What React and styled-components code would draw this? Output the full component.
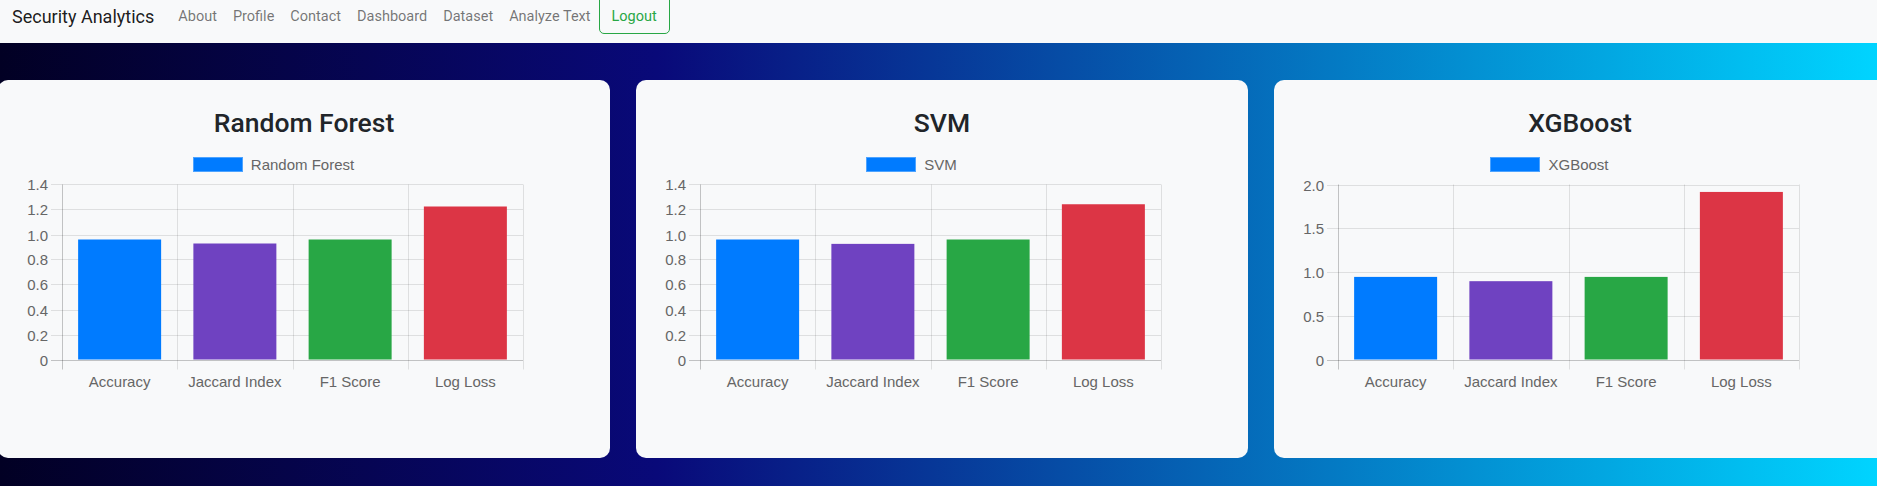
import React from "react";
import styled, { createGlobalStyle } from "styled-components";

const GlobalStyle = createGlobalStyle`
  html, body {
    margin: 0;
    padding: 0;
  }
  body {
    overflow: hidden;
    background: #020024;
    font-family: Roboto, "Liberation Sans", Arial, sans-serif;
  }
`;

const Navbar = styled.nav`
  box-sizing: border-box;
  height: 43px;
  padding: 0 12px;
  background: #f8f9fa;
`;

const NavInner = styled.div`
  display: flex;
  align-items: center;
  height: 34px;
`;

const Brand = styled.a`
  margin-right: 16px;
  font-size: 18px;
  line-height: 24px;
  color: rgba(0, 0, 0, 0.9);
  text-decoration: none;
`;

const NavLink = styled.a`
  padding: 0 8px;
  font-size: 14.5px;
  line-height: 24px;
  color: rgba(0, 0, 0, 0.55);
  text-decoration: none;
`;

const LogoutButton = styled.button`
  align-self: flex-end;
  box-sizing: border-box;
  padding: 9px 12px 4px;
  border: 1px solid #28a745;
  border-radius: 5px;
  background: transparent;
  font-family: inherit;
  font-size: 14.5px;
  line-height: 24px;
  color: #28a745;
`;

const Main = styled.main`
  padding: 37px 0 28px;
  overflow: hidden;
  background: linear-gradient(90deg, #020024 0%, #090979 35%, #00d4ff 100%);
`;

const CardRow = styled.div`
  display: flex;
  gap: 26px;
  width: 1888px;
  margin-left: -2px;
`;

const Card = styled.section`
  flex: 0 0 612px;
  box-sizing: border-box;
  padding: 26px 0 58px;
  border-radius: 10px;
  background: #f8f9fa;
`;

const Title = styled.h3`
  margin: 0;
  font-size: 26.5px;
  font-weight: 500;
  line-height: 34px;
  text-align: center;
  color: #212529;
`;

const ChartWrap = styled.div`
  width: 551px;
`;

const Legend = styled.div`
  display: flex;
  justify-content: center;
  align-items: center;
  gap: 8px;
  height: 15px;
  margin-top: 17px;
  font-family: "Liberation Sans", Arial, sans-serif;
  font-size: 15px;
  line-height: 15px;
  color: #666;
`;

const Swatch = styled.span`
  box-sizing: border-box;
  width: 50px;
  height: 15px;
  border: 1px solid #4da3ff;
  background: #007bff;
`;

const COLORS = ["#007bff", "#6f42c1", "#28a745", "#dc3545"];
const LABELS = ["Accuracy", "Jaccard Index", "F1 Score", "Log Loss"];

const MODELS = [
  { name: "Random Forest", values: [0.96, 0.928, 0.96, 1.224], max: 1.4, step: 0.2 },
  { name: "SVM", values: [0.96, 0.925, 0.96, 1.242], max: 1.4, step: 0.2 },
  { name: "XGBoost", values: [0.944, 0.895, 0.944, 1.915], max: 2.0, step: 0.5 },
];

const LEFT = 64;
const WIDTH = 461;
const TOP = 12.5;
const HEIGHT = 175;
const BOTTOM = TOP + HEIGHT;
const TICK = 11;

function BarChart({ label, values, max, step }) {
  const cat = WIDTH / values.length;
  const count = Math.round(max / step);
  const ticks = Array.from({ length: count + 1 }, (_, i) => i * step);
  const y = (v) => BOTTOM - (v / max) * HEIGHT;
  const grid = "rgba(0,0,0,0.1)";
  const axis = "rgba(0,0,0,0.22)";

  return (
    <ChartWrap>
      <Legend>
        <Swatch />
        <span>{label}</span>
      </Legend>
      <svg width="551" height="228" style={{ display: "block" }}>
        {ticks.map((t, i) => {
          const gy = Math.round(y(t)) + 0.5;
          return (
            <g key={i}>
              <line x1={LEFT - TICK} x2={LEFT + WIDTH} y1={gy} y2={gy} stroke={i === 0 ? axis : grid} />
              <text
                x={LEFT - 14}
                y={gy + 5}
                textAnchor="end"
                fontFamily="Liberation Sans, Arial, sans-serif"
                fontSize="15"
                fill="#666"
              >
                {t === 0 ? "0" : t.toFixed(1)}
              </text>
            </g>
          );
        })}
        {values.map((_, i) => {
          const gx = Math.round(LEFT + i * cat) + 0.5;
          return (
            <line key={i} x1={gx} x2={gx} y1={TOP} y2={BOTTOM + 10} stroke={i === 0 ? axis : grid} />
          );
        })}
        <line
          x1={LEFT + WIDTH + 0.5}
          x2={LEFT + WIDTH + 0.5}
          y1={TOP}
          y2={BOTTOM + 10}
          stroke={grid}
        />
        {values.map((v, i) => {
          const cx = LEFT + cat * (i + 0.5);
          const top = y(v);
          return (
            <g key={i}>
              <rect
                x={cx - 41.5}
                y={top}
                width="83"
                height={BOTTOM - top}
                fill={COLORS[i]}
              />
              <text
                x={cx}
                y={214.6}
                textAnchor="middle"
                fontFamily="Liberation Sans, Arial, sans-serif"
                fontSize="15"
                fill="#666"
              >
                {LABELS[i]}
              </text>
            </g>
          );
        })}
      </svg>
    </ChartWrap>
  );
}

export default function App() {
  return (
    <>
      <GlobalStyle />
      <Navbar>
        <NavInner>
          <Brand href="#">Security Analytics</Brand>
          <NavLink href="#">About</NavLink>
          <NavLink href="#">Profile</NavLink>
          <NavLink href="#">Contact</NavLink>
          <NavLink href="#">Dashboard</NavLink>
          <NavLink href="#">Dataset</NavLink>
          <NavLink href="#">Analyze Text</NavLink>
          <LogoutButton>Logout</LogoutButton>
        </NavInner>
      </Navbar>
      <Main>
        <CardRow>
          {MODELS.map((m) => (
            <Card key={m.name}>
              <Title>{m.name}</Title>
              <BarChart label={m.name} values={m.values} max={m.max} step={m.step} />
            </Card>
          ))}
        </CardRow>
      </Main>
    </>
  );
}
